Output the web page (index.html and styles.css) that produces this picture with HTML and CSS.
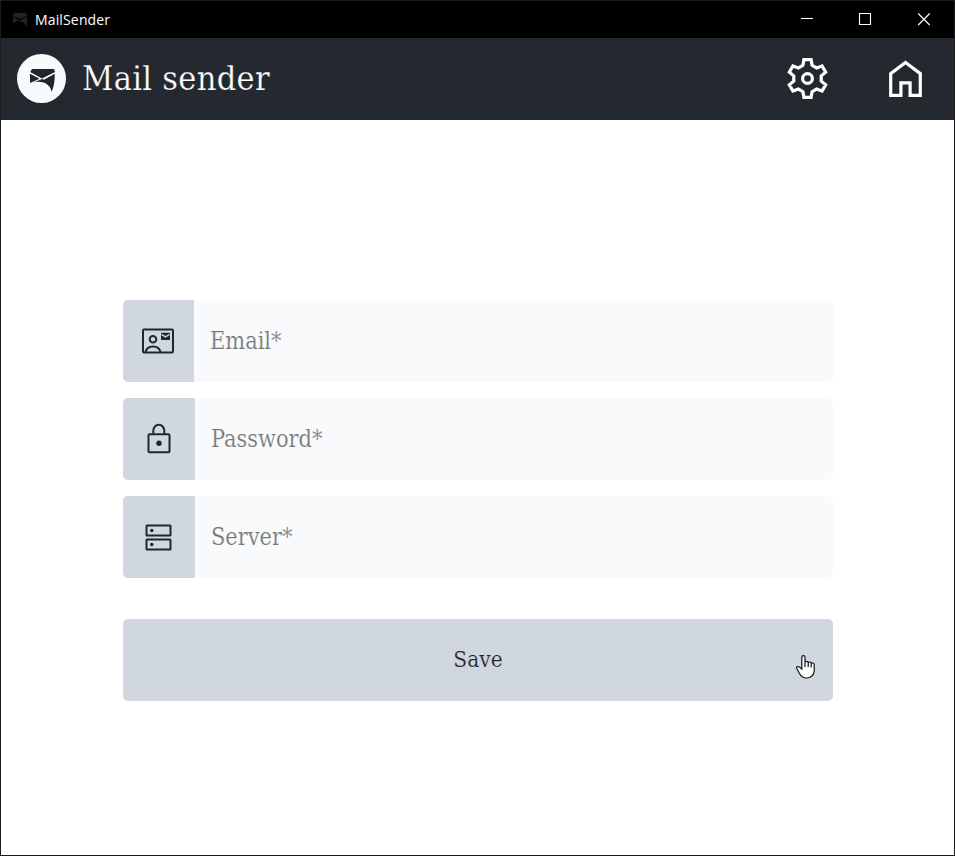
FILE: index.html
```html
<!DOCTYPE html>
<html lang="en">
<head>
<meta charset="utf-8">
<title>MailSender</title>
<link rel="stylesheet" href="styles.css">
</head>
<body>
<div class="window">
  <div class="titlebar">
    <svg class="app-icon" width="16" height="16" viewBox="0 0 16 16"><path d="M2 1h12l1 3-7 3-7-3zM1 5l6 3-6 3zM15 5v10c-1-3-3-5-6-5l-2-1z"/></svg>
    <span class="app-name">MailSender</span>
    <div class="controls">
      <svg width="58" height="37" viewBox="0 0 58 37"><path d="M23 17.5h12"/></svg>
      <svg width="58" height="37" viewBox="0 0 58 37"><path d="M23.500 12.500h11v11h-11z"/></svg>
      <svg width="60" height="37" viewBox="0 0 60 37"><path d="M24.200 12.500l11.500 11.500M35.700 12.500l-11.500 11.500"/></svg>
    </div>
  </div>
  <header class="header">
    <svg class="logo" width="49" height="49" viewBox="0 0 49 49">
      <circle cx="24.500" cy="24.500" r="24.500" fill="#f8fafc"/>
      <g fill="#20262d"><path d="M15 15h22l1 3-13 6.500L13.200 18z"/><path d="M13 19.700l9.500 5-9.500 4.200z"/><path d="M37.700 19.800c.3 6.500-.6 13-3.200 18.200-.2-3-1.500-5.500-4-7.300-4-3.200-10-3.700-16-1.500l10.500-4.300 2 .8z"/></g>
    </svg>
    <h1>Mail sender</h1>
    <nav>
      <svg width="44" height="44" viewBox="-22.500 -21.500 44 44"><path d="M-3.600-18.900H3.600L4.600-13.200 9.100-10.600 14.570-12.570 18.170-6.330 13.730-2.620V2.620L18.170 6.330 14.570 12.570 9.100 10.600 4.600 13.200 3.600 18.900H-3.600L-4.600 13.200-9.100 10.600-14.570 12.570-18.170 6.330-13.730 2.620V-2.620L-18.170-6.330-14.570-12.570-9.100-10.600-4.600-13.200Z"/><circle r="4.900"/></svg>
      <svg width="44" height="44" viewBox="-.6 .7 44 44"><path d="M7.100 39V17.300L21.900 6.200 36.700 17.300V39H26.500V26.500H17.300V39Z"/></svg>
    </nav>
  </header>
  <main>
    <form class="form">
      <label class="field email">
        <span class="prefix"><svg width="34" height="34" viewBox="0 0 34 34"><rect x="2" y="5.500" width="30" height="23" rx="1"/><circle cx="12" cy="15.300" r="3.300"/><path d="M4.500 28c1-4 4-5.500 7.500-5.500s6.500 1.500 7.500 5.500"/><path class="solid" d="M20 8.800h9v7.200h-9z"/><path class="flap" d="M20.500 10.400l4 2.500 4-2.500"/></svg></span>
        <input type="text" placeholder="Email*">
      </label>
      <label class="field">
        <span class="prefix"><svg width="34" height="34" viewBox="0 .8 34 34"><rect x="6.500" y="13" width="21" height="18" rx="1"/><path d="M11.300 13V9.500a5.500 6 0 0 1 11 0V13"/><circle class="solid" cx="17" cy="22" r="2.700"/></svg></span>
        <input type="text" placeholder="Password*">
      </label>
      <label class="field">
        <span class="prefix"><svg width="34" height="34" viewBox=".5 .5 34 34"><rect x="5" y="6" width="24" height="10" rx=".5"/><rect x="5" y="20" width="24" height="10" rx=".5"/><circle class="solid" cx="10.300" cy="11" r="1.700"/><circle class="solid" cx="10.300" cy="25" r="1.700"/></svg></span>
        <input type="text" placeholder="Server*">
      </label>
      <button type="button" class="save">Save
        <svg class="pointer" width="20" height="26" viewBox="0 0 20 26"><path d="M5.800 15V3.500c0-2.400 3.200-2.400 3.200 0V8.500c0-1.600 3.200-1.600 3.200 .2v.4c0-1.600 3-1.400 3 .3v.5c0-1.500 3-1.200 3 .7V17c0 4-3.500 7-7.500 7-4 0-6-2-7.500-5l-2.400-4.500c-1-2 1.500-2.600 2.800-1.200zM9 8.500v4.500M12.200 9v4M15.200 10v3.500"/></svg>
      </button>
    </form>
  </main>
</div>
</body>
</html>
```
FILE: styles.css
```css
* { box-sizing: border-box; }
body { margin: 0; background: #fff; font-family: "DejaVu Serif Condensed", "DejaVu Serif", serif; font-stretch: condensed; }
.window {
  width: 955px; height: 856px;
  border: 1px solid #1b1b1b;
  display: flex; flex-direction: column;
  overflow: hidden;
}
.titlebar {
  height: 37px; flex: none; background: #000; color: #fff;
  display: flex; align-items: center; padding-left: 11px; gap: 7px;
}
.app-icon { fill: #1e242a; }
.app-name { font: 14px/20px "Open Sans", sans-serif; letter-spacing: .15px; }
.controls { display: flex; margin-left: auto; }
.controls svg { fill: none; stroke: #fff; stroke-width: 1.1; }
.header {
  height: 82px; flex: none; background: #242930; color: #fff;
  display: flex; align-items: center; padding: 0 27px 1px 16px;
}
h1 {
  margin: 0 0 2px 16px; font-weight: 400; font-size: 34px; line-height: 48px;
  letter-spacing: .3px; -webkit-text-stroke: .25px #242930;
}
nav { display: flex; gap: 54px; margin-left: auto; }
nav svg { fill: none; stroke: #fff; stroke-width: 3.2; }
main { flex: 1; padding: 180px 121px 0 122px; }
.form { display: flex; flex-direction: column; gap: 16px; }
.field {
  display: flex; height: 82px; background: #f8fafc;
  border-radius: 5px; overflow: hidden;
}
.prefix {
  width: 72px; flex: none; background: #d0d7df; padding: 0 1px 1px 0;
  display: flex; align-items: center; justify-content: center;
}
.email .prefix { width: 71px; }
.prefix svg { fill: none; stroke: #20262f; stroke-width: 2; }
.prefix .solid { fill: #20262f; stroke: none; }
.prefix .flap { stroke: #d0d7df; stroke-width: 1.300; }
input {
  flex: 1; min-width: 0; border: 0; outline: 0; background: transparent;
  padding: 0 16px 2px; font-family: inherit; font-size: 23.300px; font-stretch: condensed;
}
input::placeholder { color: #757575; opacity: 1; -webkit-text-stroke: .2px #f8fafc; }
.save {
  position: relative; height: 82px; margin-top: 25px; padding: 0 0 2px;
  border: 0; border-radius: 5px; background: #d0d7df; color: #20262f;
  font-family: inherit; font-size: 22.500px; font-stretch: condensed;
  -webkit-text-stroke: .2px #d0d7df;
}
.pointer {
  position: absolute; left: 673px; top: 35px;
  fill: #fff; stroke: #10131a; stroke-width: 1.200;
}
```
